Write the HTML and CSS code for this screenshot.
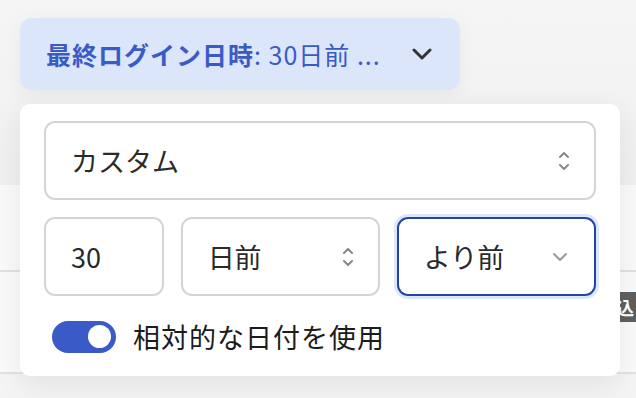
FILE: index.html
```html
<!DOCTYPE html>
<html lang="ja">
<head>
    <meta charset="UTF-8">
    <meta name="viewport" content="width=device-width, initial-scale=1.0">
    <title>最終ログイン日時フィルター</title>
    <link rel="stylesheet" href="styles.css">
</head>
<body>
    <div class="page">
        <div class="page-top"></div>
        <div class="page-row"></div>
        <div class="page-row tall">
            <span class="badge">込</span>
        </div>
    </div>

    <button class="filter-chip">
        <span class="chip-label"><b>最終ログイン日時</b>: 30日前 ...</span>
        <svg class="chip-caret" width="20" height="12" viewBox="0 0 20 12">
            <path d="M2 2 L10 10 L18 2" fill="none" stroke="#333" stroke-width="3" stroke-linecap="round" stroke-linejoin="round"/>
        </svg>
    </button>

    <div class="popover">
        <div class="field wide">
            <span>カスタム</span>
            <svg class="updown" width="12" height="24" viewBox="0 0 12 24">
                <path d="M2 8 L6 4 L10 8 M2 16 L6 20 L10 16" fill="none" stroke="#888" stroke-width="2" stroke-linecap="round" stroke-linejoin="round"/>
            </svg>
        </div>
        <div class="field-row">
            <div class="field num"><span>30</span></div>
            <div class="field unit">
                <span>日前</span>
                <svg class="updown" width="12" height="24" viewBox="0 0 12 24">
                    <path d="M2 8 L6 4 L10 8 M2 16 L6 20 L10 16" fill="none" stroke="#888" stroke-width="2" stroke-linecap="round" stroke-linejoin="round"/>
                </svg>
            </div>
            <div class="field dir focused">
                <span>より前</span>
                <svg width="16" height="10" viewBox="0 0 16 10">
                    <path d="M2 2 L8 8 L14 2" fill="none" stroke="#999" stroke-width="2" stroke-linecap="round" stroke-linejoin="round"/>
                </svg>
            </div>
        </div>
        <label class="switch-row">
            <span class="switch"><span class="knob"></span></span>
            <span class="switch-text">相対的な日付を使用</span>
        </label>
    </div>
</body>
</html>
```

FILE: styles.css
```css
body {
    margin: 0;
    background-color: #f4f4f5;
    font-family: "Noto Sans CJK JP", "Noto Sans", sans-serif;
    color: #222;
    width: 636px;
    height: 398px;
    overflow: hidden;
    position: relative;
}

/* page behind the popup */
.page {
    display: flex;
    flex-direction: column;
}

.page-top {
    height: 185px;
    background: linear-gradient(#f5f5f5, #f0f0f1);
}

.page-row {
    height: 85px;
    background-color: #fafafa;
    border-bottom: 2px solid #e2e2e4;
    display: flex;
    justify-content: flex-end;
    align-items: flex-start;
}

.page-row.tall {
    height: 100px;
}

.badge {
    background-color: #5f5f5f;
    color: #fff;
    font-weight: bold;
    font-size: 18px;
    line-height: 30px;
    height: 30px;
    width: 16px;
    overflow: hidden;
    text-indent: -4px;
    margin-top: 20px;
}

/* filter chip */
.filter-chip {
    position: absolute;
    left: 20px;
    top: 18px;
    width: 440px;
    height: 72px;
    border: none;
    border-radius: 12px;
    background-color: #dce6fb;
    box-shadow: 0 4px 20px rgba(0, 0, 0, 0.05);
    display: flex;
    align-items: center;
    justify-content: space-between;
    padding: 0 28px 0 26px;
    font-family: inherit;
    cursor: pointer;
}

.chip-label {
    color: #3a5bc4;
    font-size: 25px;
    letter-spacing: 1px;
}

.chip-label b {
    font-weight: 700;
}

/* popover */
.popover {
    position: absolute;
    left: 20px;
    top: 104px;
    width: 600px;
    height: 272px;
    background-color: #fff;
    border-radius: 10px;
    box-shadow: 0 8px 30px rgba(0, 0, 0, 0.08);
    box-sizing: border-box;
    padding: 17px 24px;
    display: flex;
    flex-direction: column;
    gap: 17px;
}

.field {
    box-sizing: border-box;
    height: 79px;
    border: 2px solid #d6d3d3;
    border-radius: 11px;
    display: flex;
    align-items: center;
    justify-content: space-between;
    padding: 0 24px 0 25px;
    font-size: 27px;
    color: #2a2a2a;
}

.field-row {
    display: flex;
    gap: 17px;
}

.num {
    width: 120px;
}

.unit {
    width: 200px;
}

.dir {
    width: 200px;
    padding-right: 26px;
}

.focused {
    border-color: #2444a4;
    box-shadow: 0 0 0 3px #dde7fb;
}

.switch-row {
    display: flex;
    align-items: center;
    gap: 17px;
    font-size: 27px;
    color: #1c1c1c;
    padding-left: 8px;
    margin-top: 4px;
}

.switch-text {
    letter-spacing: 1px;
}

.switch {
    width: 64px;
    height: 32px;
    border-radius: 16px;
    background-color: #3a5bc7;
    display: flex;
    align-items: center;
    justify-content: flex-end;
    padding-right: 5px;
    box-sizing: border-box;
}

.knob {
    width: 23px;
    height: 23px;
    border-radius: 50%;
    background-color: #fff;
}
```
